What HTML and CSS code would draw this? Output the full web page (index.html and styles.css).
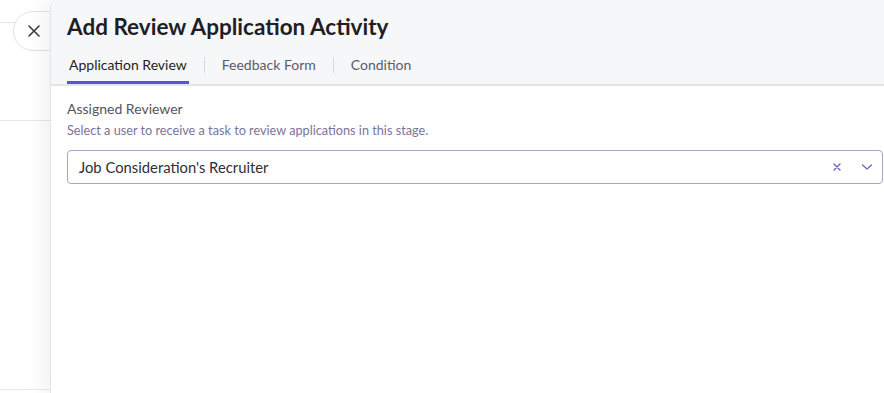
FILE: index.html
```html
<!DOCTYPE html>
<html lang="en">
  <head>
    <meta charset="UTF-8" />
    <meta name="viewport" content="width=device-width, initial-scale=1.0" />
    <title>Add Review Application Activity</title>
    <link rel="stylesheet" href="styles.css">
  </head>
  <body>
    <div class="page">
      <div class="page-row row-top"></div>
      <div class="page-row row-mid"></div>
      <div class="page-row row-bottom"></div>
    </div>

    <button class="close-btn" aria-label="Close">
      <svg width="14" height="14" viewBox="0 0 14 14">
        <path d="M2 2L12 12M12 2L2 12" stroke="#3a3a44" stroke-width="1.6" stroke-linecap="round" />
      </svg>
    </button>

    <div class="drawer">
      <div class="drawer-header">
        <h1>Add Review Application Activity</h1>
        <ul class="tabs">
          <li class="tab active">Application Review</li>
          <li class="tab-sep"></li>
          <li class="tab">Feedback Form</li>
          <li class="tab-sep"></li>
          <li class="tab">Condition</li>
        </ul>
      </div>

      <div class="drawer-body">
        <div class="field">
          <div class="field-label">Assigned Reviewer</div>
          <div class="field-help">Select a user to receive a task to review applications in this stage.</div>
          <div class="select">
            <span class="select-value">Job Consideration's Recruiter</span>
            <span class="select-icons">
              <svg width="10" height="10" viewBox="0 0 10 10">
                <path d="M2 2L8 8M8 2L2 8" stroke="#6b62c4" stroke-width="1.4" stroke-linecap="round" />
              </svg>
              <svg width="12" height="8" viewBox="0 0 12 8">
                <path d="M1.5 2L6 6L10.5 2" fill="none" stroke="#6b62c4" stroke-width="1.2" stroke-linecap="round" stroke-linejoin="round" />
              </svg>
            </span>
          </div>
        </div>
      </div>
    </div>
  </body>
</html>
```

FILE: styles.css
```css
body {
  margin: 0;
  padding: 0;
  height: 393px;
  overflow: hidden;
  background: #fff;
  font-family: "Lato", "Open Sans", sans-serif;
  color: #2a2a33;
}

.page {
  position: absolute;
  top: 0;
  left: 0;
  width: 60px;
  height: 393px;
}

.page-row {
  border-bottom: 1px solid #e6e6ec;
}

.row-top {
  height: 22px;
}

.row-mid {
  height: 97px;
}

.row-bottom {
  height: 268px;
}

.close-btn {
  position: absolute;
  top: 11px;
  left: 13px;
  width: 60px;
  height: 40px;
  padding: 0 0 0 13px;
  border: 1px solid #e2e2ea;
  border-radius: 20px;
  background: #fff;
  display: flex;
  align-items: center;
  cursor: pointer;
  box-sizing: border-box;
}

.drawer {
  position: absolute;
  top: 0;
  left: 50px;
  right: 0;
  bottom: 0;
  background: #fff;
  border-left: 1px solid #e4e4ea;
  border-top-left-radius: 8px;
  box-shadow: -8px 0 18px rgba(40, 40, 60, 0.06);
  overflow: hidden;
}

.drawer-header {
  background: #f6f7f9;
  border-bottom: 2px solid #e4e5e8;
  padding: 12px 0 0 16px;
}

.drawer-header h1 {
  margin: 0;
  font-size: 22.5px;
  font-weight: 700;
  color: #1e1e24;
  line-height: 30px;
}

.tabs {
  list-style: none;
  margin: 13px 0 0;
  padding: 0;
  display: flex;
  align-items: flex-start;
}

.tab {
  font-size: 14px;
  color: #5c5c66;
  padding: 0 2px;
  line-height: 20px;
  height: 26px;
  border-bottom: 3px solid transparent;
}

.tab.active {
  color: #1e1e24;
  border-bottom-color: #5b50d6;
}

.tab-sep {
  width: 1px;
  height: 16px;
  background: #d8d8de;
  margin: 2px 15px 0;
}

.drawer-body {
  padding: 13px 0 0 16px;
}

.field-label {
  font-size: 14px;
  color: #55555e;
  line-height: 20px;
}

.field-help {
  font-size: 12.7px;
  color: #7b7499;
  line-height: 20px;
  margin-top: 1px;
}

.select {
  margin-top: 10px;
  margin-right: 1px;
  height: 34px;
  box-sizing: border-box;
  border: 1px solid #a9a6c2;
  border-radius: 4px;
  display: flex;
  align-items: center;
  justify-content: space-between;
  padding: 0 9px 0 11px;
}

.select-value {
  font-size: 14.8px;
  color: #2e2e36;
}

.select-icons {
  display: flex;
  align-items: center;
  gap: 19px;
}
```
